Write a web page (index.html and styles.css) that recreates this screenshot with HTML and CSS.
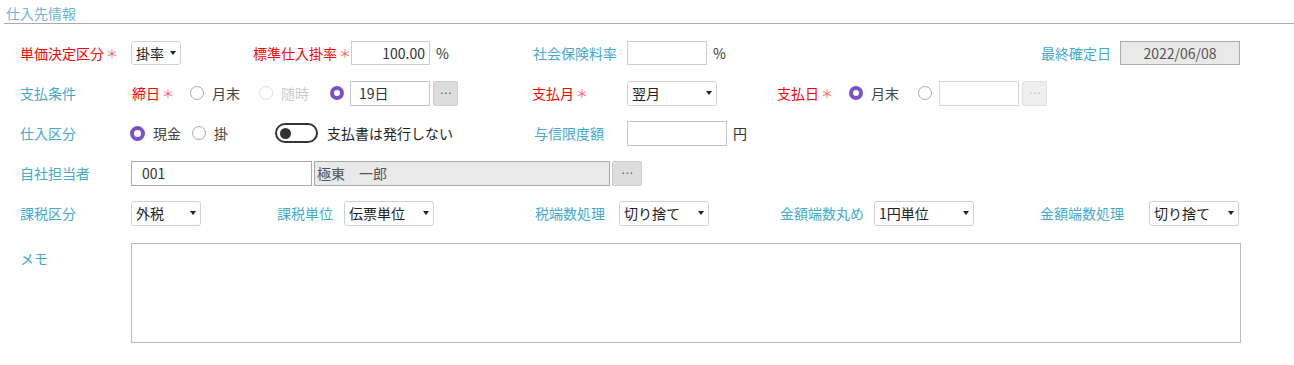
FILE: index.html
```html
<!DOCTYPE html>
<html lang="ja">
<head>
    <meta charset="UTF-8">
    <meta name="viewport" content="width=device-width, initial-scale=1.0">
    <title>仕入先情報</title>
    <link rel="stylesheet" href="styles.css">
</head>
<body>

    <div class="section-title">仕入先情報</div>

    <div class="form">
        <!-- 1行目 -->
        <div class="row">
            <span class="lbl req w111">単価決定区分<span class="star">＊</span></span>
            <div class="select w50 h24">掛率</div>
            <span class="lbl req w98 ml72">標準仕入掛率<span class="star">＊</span></span>
            <input type="text" class="input num w79 h24" value="100.00">
            <span class="unit">%</span>
            <span class="lbl w94 ml83">社会保険料率</span>
            <input type="text" class="input w80 h24">
            <span class="unit">%</span>
            <span class="lbl w79 ml314">最終確定日</span>
            <input type="text" class="input locked center w120 h24" value="2022/06/08" readonly>
        </div>

        <!-- 2行目 -->
        <div class="row">
            <span class="lbl w112">支払条件</span>
            <span class="lbl req w58">締日<span class="star">＊</span></span>
            <label class="opt"><span class="radio"></span>月末</label>
            <label class="opt off wide-gap"><span class="radio"></span>随時</label>
            <span class="radio on"></span>
            <input type="text" class="input mid w80 ml6 pl8" value="19日">
            <button class="dots">⋯</button>
            <span class="lbl req w95 ml74">支払月<span class="star">＊</span></span>
            <div class="select w90">翌月</div>
            <span class="lbl req w72 ml60">支払日<span class="star">＊</span></span>
            <label class="opt"><span class="radio on"></span>月末</label>
            <span class="radio"></span>
            <input type="text" class="input pale w80 ml7">
            <button class="dots" disabled>⋯</button>
        </div>

        <!-- 3行目 -->
        <div class="row">
            <span class="lbl w110">仕入区分</span>
            <label class="opt tight"><span class="radio on big"></span>現金</label>
            <label class="opt"><span class="radio"></span>掛</label>
            <span class="toggle ml28"><span class="knob"></span></span>
            <span class="toggle-text">支払書は発行しない</span>
            <span class="lbl w93 ml81">与信限度額</span>
            <input type="text" class="input mid w100">
            <span class="unit">円</span>
        </div>

        <!-- 4行目 -->
        <div class="row">
            <span class="lbl w111">自社担当者</span>
            <input type="text" class="input dark w181 pl10" value="001">
            <input type="text" class="input locked w296 ml2 pl2" value="極東　一郎" readonly>
            <button class="dots wide">⋯</button>
        </div>

        <!-- 5行目 -->
        <div class="row">
            <span class="lbl w111">課税区分</span>
            <div class="select w70">外税</div>
            <span class="lbl w67 ml76">課税単位</span>
            <div class="select w90">伝票単位</div>
            <span class="lbl w84 ml101">税端数処理</span>
            <div class="select w90">切り捨て</div>
            <span class="lbl w94 ml71">金額端数丸め</span>
            <div class="select w100">1円単位</div>
            <span class="lbl w109 ml66">金額端数処理</span>
            <div class="select w90">切り捨て</div>
        </div>

        <!-- メモ -->
        <div class="memo-row">
            <span class="lbl w111 memo-lbl">メモ</span>
            <textarea class="memo"></textarea>
        </div>
    </div>

</body>
</html>
```

FILE: styles.css
```css
body {
    font-family: "Noto Sans CJK JP", "Noto Sans", sans-serif;
    font-size: 14px;
    color: #333;
    margin: 0;
    background-color: #fff;
}

.section-title {
    margin-left: 4px;
    padding: 4px 0 0 2px;
    line-height: 19px;
    height: 19px;
    color: #6cb8d6;
    border-bottom: 1px solid #aaa;
}

.form {
    padding: 9px 0 0 20px;
}

.row {
    display: flex;
    align-items: center;
    height: 40px;
}

/* ラベル */
.lbl {
    flex: none;
    color: #45a9d0;
    white-space: nowrap;
}

.lbl.req {
    color: #ff0000;
}

.star {
    color: #ff5b5b;
    font-size: 12px;
    margin-left: 2px;
}

.unit {
    margin-left: 6px;
    width: 14px;
    color: #333;
}

/* 入力欄 */
.input {
    flex: none;
    box-sizing: border-box;
    height: 25px;
    border: 1px solid #ccc;
    font-family: inherit;
    font-size: 14px;
    color: #333;
    padding: 0 4px;
    outline: none;
    background-color: #fff;
}

.input.num {
    text-align: right;
}

.input.center {
    text-align: center;
}

.input.locked {
    background-color: #e9e9e9;
    border-color: #aaa;
    color: #555;
}

.input.mid {
    border-color: #c4c4c4;
}

.input.pale {
    border-color: #d6d6d6;
}

.input.dark {
    border-color: #aaa;
}

/* セレクト */
.select {
    flex: none;
    box-sizing: border-box;
    height: 25px;
    display: flex;
    align-items: center;
    justify-content: space-between;
    padding: 0 4px 0 4px;
    border: 1px solid #d0d0d0;
    border-radius: 3px;
    color: #222;
    background-color: #fff;
}

.select::after {
    content: "";
    border-left: 3px solid transparent;
    border-right: 3px solid transparent;
    border-top: 4px solid #222;
}

/* ボタン */
.dots {
    flex: none;
    box-sizing: border-box;
    width: 25px;
    height: 25px;
    margin-left: 3px;
    padding: 0;
    border: 1px solid #ccc;
    border-radius: 2px;
    background-color: #ddd;
    color: #555;
    font-family: "DejaVu Sans", sans-serif;
    font-size: 12px;
    line-height: 20px;
    cursor: pointer;
}

.dots:disabled {
    background-color: #eee;
    border-color: #e0e0e0;
    color: #bbb;
    cursor: default;
}

.dots.wide {
    width: 30px;
    margin-left: 2px;
}

/* ラジオ */
.opt {
    flex: none;
    display: flex;
    align-items: center;
    gap: 8px;
    margin-right: 19px;
    color: #444;
}

.opt.wide-gap {
    margin-right: 21px;
}

.opt.tight {
    margin-right: 11px;
}

.opt.off {
    color: #ccc;
}

.radio {
    flex: none;
    box-sizing: border-box;
    width: 14px;
    height: 14px;
    border-radius: 50%;
    border: 1px solid #aaa;
    background-color: #fff;
}

.opt.off .radio {
    border-color: #ddd;
}

.radio.on {
    border: 4px solid #7b52c6;
}

.radio.big {
    width: 15px;
    height: 15px;
}

/* トグル */
.toggle {
    flex: none;
    box-sizing: border-box;
    width: 43px;
    height: 20px;
    border: 2px solid #333;
    border-radius: 10px;
    display: flex;
    align-items: center;
    padding-left: 3px;
}

.knob {
    width: 11px;
    height: 11px;
    border-radius: 50%;
    background-color: #333;
}

.toggle-text {
    margin-left: 9px;
    color: #222;
}

/* メモ */
.memo-row {
    display: flex;
    align-items: flex-start;
    margin-top: 10px;
}

.memo-lbl {
    padding-top: 5px;
}

.memo {
    box-sizing: border-box;
    width: 1110px;
    height: 100px;
    border: 1px solid #bbb;
    resize: none;
    outline: none;
}

/* 幅・余白 */
.h24 { height: 24px; }
.w50 { width: 50px; }
.w58 { width: 58px; }
.w67 { width: 67px; }
.w70 { width: 70px; }
.w72 { width: 72px; }
.w79 { width: 79px; }
.w80 { width: 80px; }
.w84 { width: 84px; }
.w90 { width: 90px; }
.w93 { width: 93px; }
.w94 { width: 94px; }
.w95 { width: 95px; }
.w98 { width: 98px; }
.w100 { width: 100px; }
.w109 { width: 109px; }
.w110 { width: 110px; }
.w111 { width: 111px; }
.w112 { width: 112px; }
.w120 { width: 120px; }
.w181 { width: 181px; }
.w296 { width: 296px; }
.ml2 { margin-left: 2px; }
.ml6 { margin-left: 6px; }
.ml7 { margin-left: 7px; }
.ml28 { margin-left: 28px; }
.ml60 { margin-left: 60px; }
.ml66 { margin-left: 66px; }
.ml71 { margin-left: 71px; }
.ml72 { margin-left: 72px; }
.ml74 { margin-left: 74px; }
.ml76 { margin-left: 76px; }
.ml81 { margin-left: 81px; }
.ml83 { margin-left: 83px; }
.ml101 { margin-left: 101px; }
.ml314 { margin-left: 314px; }
.pl2 { padding-left: 2px; }
.pl8 { padding-left: 8px; }
.pl10 { padding-left: 10px; }
```
